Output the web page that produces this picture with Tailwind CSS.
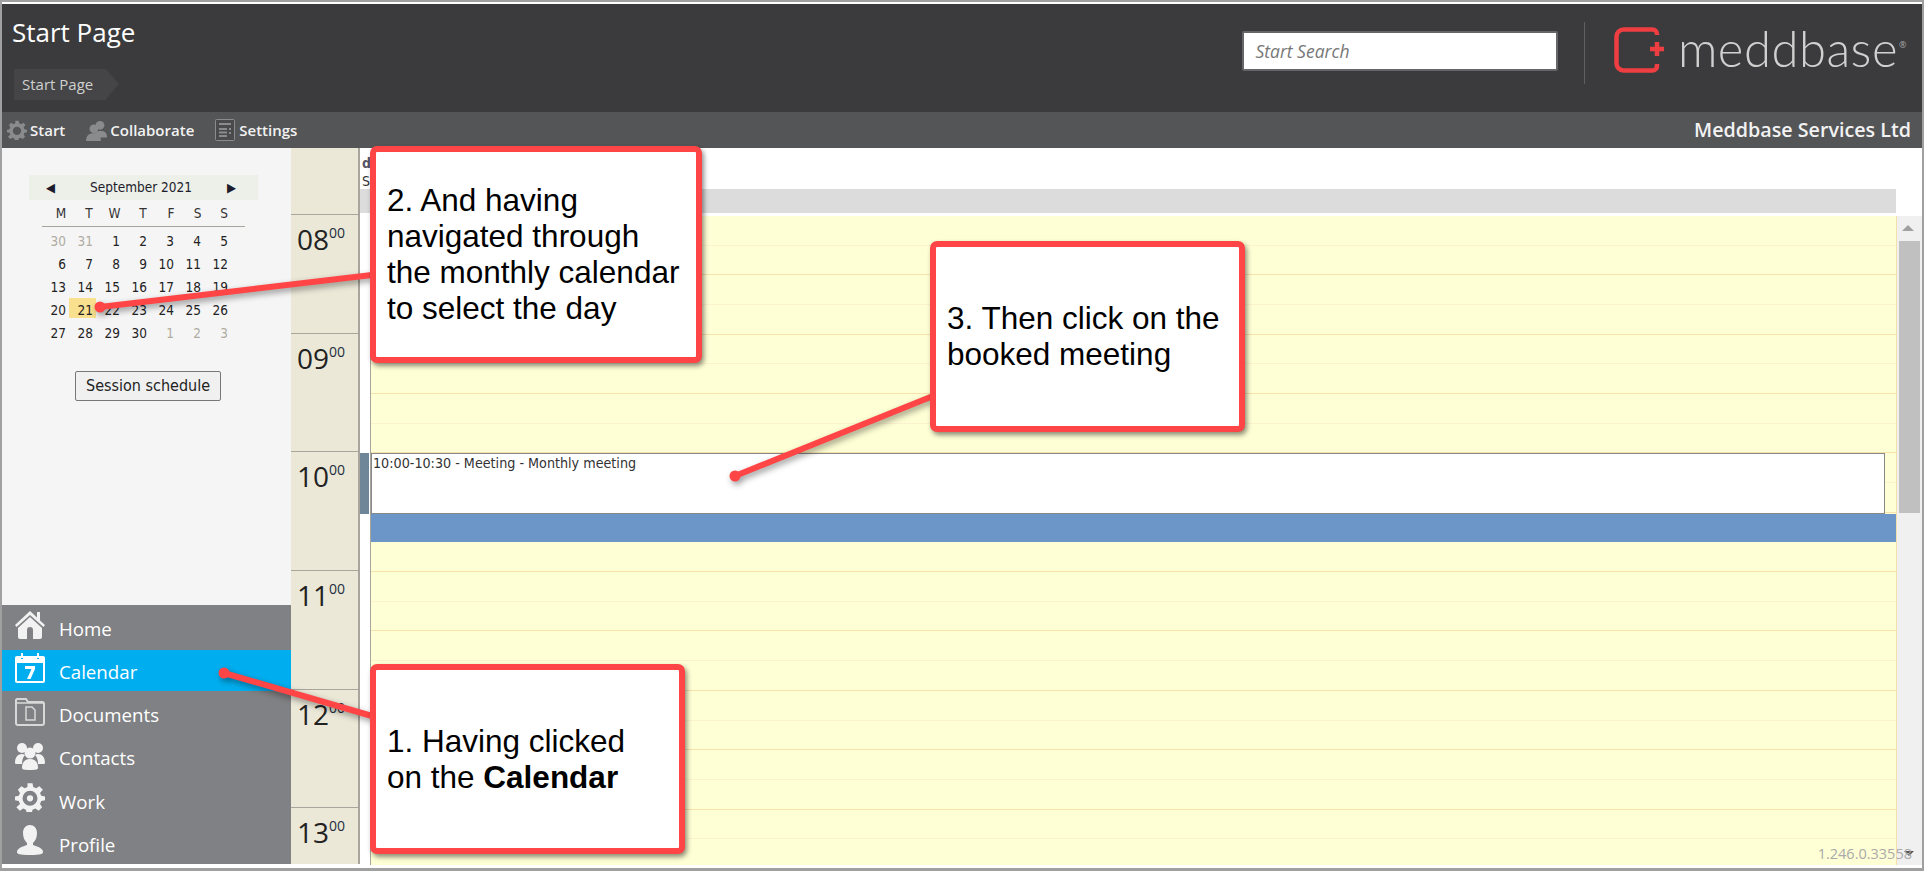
<!DOCTYPE html>
<html lang="en">
<head>
<meta charset="UTF-8">
<title>Start Page</title>
<script src="https://cdn.jsdelivr.net/npm/@tailwindcss/browser@4"></script>
</head>
<body class="bg-white font-['Open_Sans',sans-serif]">
<div class="relative w-[1924px] h-[871px] overflow-hidden border-2 border-[#a0a0a0] border-b-[3px] bg-white flex flex-col">
  <!-- header -->
  <header class="mt-[2px] h-[108px] shrink-0 bg-[#3b3b3d] flex justify-between">
    <div class="pl-[10px] pt-[12px]">
      <h1 class="text-[26px] leading-[32px] text-white">Start Page</h1>
      <div class="mt-[21px] ml-[2px] flex w-[105px] h-[31px]">
        <div class="w-[92px] bg-[#454547] text-[#d0d0d0] text-[15px] leading-[31px] pl-[8px] whitespace-nowrap">Start Page</div>
        <div class="w-0 h-0 border-y-[15.5px] border-y-transparent border-l-[13px] border-l-[#454547]"></div>
      </div>
    </div>
    <div class="flex items-start">
      <div class="mt-[27px] w-[316px] h-[40px] bg-white border-2 border-[#666668] rounded-[2px] pl-[11px] text-[17.500px] leading-[36px] italic text-[#777]">Start Search</div>
      <div class="ml-[26px] mt-[18px] w-px h-[62px] bg-[#5f5f61]"></div>
      <div class="ml-[29px] mt-[23px] flex items-start">
        <svg width="52" height="46" viewBox="0 0 52 46" class="shrink-0"><path d="M43 8V7a4.500 4.500 0 0 0-4.500-4.500H9.500a7 7 0 0 0-7 7v27a7 7 0 0 0 7 7h29a4.500 4.500 0 0 0 4.500-4.500v-2" fill="none" stroke="#ef3e42" stroke-width="4.500"/><path d="M43 15v14M36 22h14" stroke="#ef3e42" stroke-width="4.500"/></svg>
        <span class="ml-[11.500px] -mt-[9px] font-['Lato',sans-serif] font-light text-[49px] leading-[60px] text-[#d0d0d0] tracking-[0.5px]">meddbase</span>
        <span class="ml-[1px] mt-[12px] text-[9px] leading-[12px] text-[#aaa]">®</span>
      </div>
      <div class="w-[15.500px]"></div>
    </div>
  </header>
  <!-- toolbar -->
  <nav class="h-[36px] shrink-0 bg-[#545557] flex items-center justify-between text-[15px] font-semibold text-[#f2f2f2]">
    <div class="flex items-center pl-[5px]">
      <svg width="20" height="20" viewBox="0 0 24 24" fill="#8a8b8d"><path fill-rule="evenodd" d="M10 1h4l.6 3 2.300 1 2.600-1.700 2.800 2.800L20 8.700l1 2.300 3 .6v3l-3 .6-1 2.300 1.700 2.600-2.800 2.800-2.600-1.700-2.300 1-.6 3h-4l-.6-3-2.300-1-2.600 1.700-2.800-2.800L4 17.500 3 15.200 0 14.600v-3l3-.6 1-2.300L2.300 6.100l2.800-2.800L7.700 5 10 4zM12 8a5 5 0 1 0 0 10 5 5 0 0 0 0-10z"/></svg>
      <span class="ml-[3px] pt-[1px]">Start</span>
      <svg class="ml-[21px]" width="21" height="21" viewBox="0 0 24 24" fill="#8a8b8d"><circle cx="16" cy="6" r="5"/><path d="M10 15c2-3 10-3 12-1 2 2 2 5 2 6H14z"/><circle cx="9" cy="10" r="5"/><path d="M0 24c0-6 3-9 9-9s8 3 8 9z"/></svg>
      <span class="ml-[3px] pt-[1px]">Collaborate</span>
      <svg class="ml-[21px]" width="20" height="22" viewBox="0 0 20 22"><rect x="0.500" y="0.500" width="19" height="21" rx="1" fill="#4a4a4c" stroke="#8a8b8d"/><path d="M4 4h12v2H4zM4 9h8v2H4zM4 12.500h8v2H4zM4 16h8v2H4zM14 9h2v2h-2zM14 13h2v2h-2z" fill="#8a8b8d"/></svg>
      <span class="ml-[4px] pt-[1px]">Settings</span>
    </div>
    <div class="pr-[11px] text-[19.700px]">Meddbase Services Ltd</div>
  </nav>
  <!-- body -->
  <div class="flex flex-1 min-h-0">
    <aside class="w-[289px] shrink-0 flex flex-col h-[716px]">
      <div class="h-[457px] bg-[#f5f5f5] pt-[27px] pl-[27px] font-['DejaVu_Sans_Condensed','DejaVu_Sans',sans-serif] text-[13.500px] text-[#222]">
        <div class="w-[229px] h-[25px] bg-[#edf0e8] flex items-center justify-between pl-[17px] pr-[22px] text-[#1c1c2c]"><span class="text-[13px]">◀</span><span>September 2021</span><span class="text-[13px]">▶</span></div>
        <div class="ml-[13px] w-[203px] h-[27px] border-b border-[#a8a69c] grid grid-cols-[repeat(7,27px)] items-center text-center text-[#333]">
          <span class="pl-[11px]">M</span><span class="pl-[13px]">T</span><span class="pl-[10px]">W</span><span class="pl-[13px]">T</span><span class="pl-[15px]">F</span><span class="pl-[14px]">S</span><span class="pl-[13px]">S</span>
        </div>
        <div class="ml-[13px] mt-[2px] grid grid-cols-[repeat(7,27px)] auto-rows-[20px] gap-y-[3px] text-right leading-[24px]">
          <span class="pr-[3px] text-[#b0aca2]">30</span><span class="pr-[3px] text-[#b0aca2]">31</span><span class="pr-[3px]">1</span><span class="pr-[3px]">2</span><span class="pr-[3px]">3</span><span class="pr-[3px]">4</span><span class="pr-[3px]">5</span>
          <span class="pr-[3px]">6</span><span class="pr-[3px]">7</span><span class="pr-[3px]">8</span><span class="pr-[3px]">9</span><span class="pr-[3px]">10</span><span class="pr-[3px]">11</span><span class="pr-[3px]">12</span>
          <span class="pr-[3px]">13</span><span class="pr-[3px]">14</span><span class="pr-[3px]">15</span><span class="pr-[3px]">16</span><span class="pr-[3px]">17</span><span class="pr-[3px]">18</span><span class="pr-[3px]">19</span>
          <span class="pr-[3px]">20</span><span class="pr-[3px] bg-[#f9e08e]">21</span><span class="pr-[3px]">22</span><span class="pr-[3px]">23</span><span class="pr-[3px]">24</span><span class="pr-[3px]">25</span><span class="pr-[3px]">26</span>
          <span class="pr-[3px]">27</span><span class="pr-[3px]">28</span><span class="pr-[3px]">29</span><span class="pr-[3px]">30</span><span class="pr-[3px] text-[#b0aca2]">1</span><span class="pr-[3px] text-[#b0aca2]">2</span><span class="pr-[3px] text-[#b0aca2]">3</span>
        </div>
        <button class="block ml-[46px] mt-[30px] w-[146px] h-[30px] bg-[#f0f0f0] border border-[#777] rounded-[2px] text-[16px] text-[#222]">Session schedule</button>
      </div>
      <div class="h-[259px] bg-[#808184] text-white text-[18.700px] flex flex-col">
        <div class="h-[45px] flex items-center pl-[13px] pt-[3px]">
          <svg width="30" height="30" viewBox="0 0 30 30" class="-mt-[8px]" fill="#f2f2f2"><path d="M15 1 0 15l1.500 2L15 5l13.500 12 1.500-2-5-4.600V2h-3v5.600z"/><path fill-rule="evenodd" d="M15 7 3 18v9a2 2 0 0 0 2 2h20a2 2 0 0 0 2-2v-9zM12 20a3 3 0 0 1 6 0v9h-6z"/></svg>
          <span class="ml-[14px]">Home</span>
        </div>
        <div class="h-[41px] flex items-center pl-[13px] pt-[3px] bg-[#00aeef]">
          <svg width="30" height="30" viewBox="0 0 30 30" class="-mt-[8px]"><path fill="#fff" d="M2 3h4v3h2V3h14v3h2V3h4a2 2 0 0 1 2 2v23a2 2 0 0 1-2 2H2a2 2 0 0 1-2-2V5a2 2 0 0 1 2-2z"/><rect x="2" y="10" width="26" height="18" fill="#00aeef"/><path d="M10 13h10v3l-4.500 10h-3.500l4.500-10H10z" fill="#fff"/><path d="M6 0h2v5H6zM22 0h2v5h-2z" fill="#fff"/></svg>
          <span class="ml-[14px]">Calendar</span>
        </div>
        <div class="h-[43px] flex items-center pl-[13px] pt-[5px]">
          <svg width="30" height="30" viewBox="0 0 30 30" class="-mt-[8px]"><path d="M2 3h9l2 3h14a2 2 0 0 1 2 2v19a2 2 0 0 1-2 2H3a2 2 0 0 1-2-2V4z" fill="#808184" stroke="#d8d8d8" stroke-width="2"/><path d="M1 7h28" stroke="#d8d8d8" stroke-width="1.500"/><path d="M11 11h6l3 3v10h-9z" fill="none" stroke="#d8d8d8" stroke-width="1.500"/></svg>
          <span class="ml-[14px]">Documents</span>
        </div>
        <div class="h-[43px] flex items-center pl-[13px] pt-[5px]">
          <svg width="30" height="30" viewBox="0 0 30 30" class="-mt-[6px]" fill="#f2f2f2"><circle cx="7" cy="8" r="5"/><circle cx="23" cy="8" r="5"/><path d="M0 23c0-6 3-9 7-9 1 0 2 .3 3 1-2 2-3 5-3 9H3c-2 0-3 0-3-1zM30 23c0-6-3-9-7-9-1 0-2 .3-3 1 2 2 3 5 3 9h4c2 0 3 0 3-1z"/><circle cx="15" cy="13" r="5.500"/><path d="M7 28c0-6 3-9 8-9s8 3 8 9c0 1-1 2-8 2s-8-1-8-2z"/></svg>
          <span class="ml-[14px]">Contacts</span>
        </div>
        <div class="h-[43px] flex items-center pl-[13px] pt-[7px]">
          <svg width="30" height="30" viewBox="0 0 24 24" class="-mt-[10px]" fill="#f2f2f2"><path fill-rule="evenodd" d="M10 1h4l.6 3 2.300 1 2.600-1.700 2.800 2.800L20 8.700l1 2.300 3 .6v3l-3 .6-1 2.300 1.700 2.600-2.800 2.800-2.600-1.700-2.300 1-.6 3h-4l-.6-3-2.300-1-2.600 1.700-2.800-2.800L4 17.500 3 15.200 0 14.600v-3l3-.6 1-2.300L2.300 6.100l2.800-2.800L7.700 5 10 4zM12 7a6 6 0 1 0 0 12 6 6 0 0 0 0-12zm0 3.500a2.500 2.500 0 1 1 0 5 2.500 2.500 0 0 1 0-5z"/></svg>
          <span class="ml-[14px]">Work</span>
        </div>
        <div class="h-[43px] flex items-center pl-[13px] pt-[7px]">
          <svg width="30" height="30" viewBox="0 0 30 30" class="-mt-[10px]" fill="#f2f2f2"><path d="M15 0c4 0 7 3 7 8s-2 8-4 10v2c4 1.500 10 3 10 7 0 2-2 3-13 3S2 29 2 27c0-4 6-5.500 10-7v-2c-2-2-4-5-4-10s3-8 7-8z"/></svg>
          <span class="ml-[14px]">Profile</span>
        </div>
      </div>
    </aside>
    <!-- times -->
    <div class="w-[69px] shrink-0 bg-[#ebe8d8] border-r-2 border-r-[#a8a69c] h-[716px] pt-[66px] text-[#222]">
      <div class="border-t border-[#a8a69c]"></div>
      <div class="h-[118.700px] border-b border-[#a8a69c] pl-[6px] pt-[7px] text-[28px] leading-[34px]">08<sup class="text-[14px] -top-[12px] text-[#1d2d3d]">00</sup></div>
      <div class="h-[118.700px] border-b border-[#a8a69c] pl-[6px] pt-[7px] text-[28px] leading-[34px]">09<sup class="text-[14px] -top-[12px] text-[#1d2d3d]">00</sup></div>
      <div class="h-[118.700px] border-b border-[#a8a69c] pl-[6px] pt-[7px] text-[28px] leading-[34px]">10<sup class="text-[14px] -top-[12px] text-[#1d2d3d]">00</sup></div>
      <div class="h-[118.700px] border-b border-[#a8a69c] pl-[6px] pt-[7px] text-[28px] leading-[34px]">11<sup class="text-[14px] -top-[12px] text-[#1d2d3d]">00</sup></div>
      <div class="h-[118.700px] border-b border-[#a8a69c] pl-[6px] pt-[7px] text-[28px] leading-[34px]">12<sup class="text-[14px] -top-[12px] text-[#1d2d3d]">00</sup></div>
      <div class="h-[54px] pl-[6px] pt-[7px] text-[28px] leading-[34px]">13<sup class="text-[14px] -top-[12px] text-[#1d2d3d]">00</sup></div>
    </div>
    <!-- day column, its heading is hidden behind callout 2 apart from the first letters -->
    <div class="flex-1 min-w-0 flex flex-col bg-white">
      <div class="h-[41px] ml-[2px] w-[8px] overflow-hidden pt-[6px] font-['DejaVu_Sans_Condensed','DejaVu_Sans',sans-serif] text-[14px] leading-[18px] text-[#333]"><b class="text-[#556]">d</b><br>S</div>
      <div class="h-[24px] mr-[26px] bg-[#dcdcdc]"></div>
      <div class="h-[3px]"></div>
      <div class="flex h-[649px]">
        <div class="w-[11px] border-r border-[#a8a69c] relative">
          <div class="absolute left-0 top-[237px] w-[9px] h-[61px] bg-[#6f8598]"></div>
        </div>
        <div class="flex-1 min-w-0 bg-[#ffffd5] border-r border-[#f5dfa8] relative bg-[repeating-linear-gradient(to_bottom,#ffffd5_0,#ffffd5_28.700px,#fbf3cf_28.700px,#fbf3cf_29.700px,#ffffd5_29.700px,#ffffd5_58.350px,#f7e2ab_58.350px,#f7e2ab_59.350px)]">
          <div class="absolute left-0 right-[11px] top-[237px] h-[61px] bg-white border border-[#888] pl-[1px] font-['DejaVu_Sans_Condensed','DejaVu_Sans',sans-serif] text-[14.200px] leading-[18px] text-[#333]">10:00-10:30 - Meeting - Monthly meeting</div>
          <div class="absolute left-0 right-0 top-[298px] h-[28px] bg-[#6c96c8]"></div>
        </div>
        <div class="w-[25px] bg-[#f0f0f0] relative">
          <div class="absolute left-[5px] top-[9px] w-0 h-0 border-x-[6px] border-x-transparent border-b-[6px] border-b-[#a0a0a0]"></div>
          <div class="absolute left-[2px] top-[25px] w-[21px] h-[272px] bg-[#c0c0c0]"></div>
          <div class="absolute left-[7px] bottom-[9px] w-0 h-0 border-x-[5px] border-x-transparent border-t-[5px] border-t-[#505050]"></div>
        </div>
      </div>
    </div>
  </div>
  <div class="absolute right-[10px] bottom-[4px] text-[14.500px] leading-[20px] text-[#aaa]">1.246.0.33558</div>
  <!-- annotations -->
  <svg class="absolute -left-[2px] -top-[2px]" width="1924" height="871" style="filter:drop-shadow(2px 3px 3px rgba(0,0,0,.4))">
    <g stroke="#ff4545" stroke-width="6" fill="#ff4545">
      <path d="M100 307 372 275"/><circle cx="100" cy="307" r="5.500" stroke="none"/>
      <path d="M224 673 372 716"/><circle cx="224" cy="673" r="5.500" stroke="none"/>
      <path d="M735 476 933 396"/><circle cx="735" cy="476" r="5.500" stroke="none"/>
    </g>
  </svg>
  <div class="absolute left-[368px] top-[144px] w-[332px] h-[217px] bg-white border-[6px] border-[#ff4545] rounded-[7px] shadow-[2px_3px_5px_rgba(0,0,0,.45)] pl-[11px] pb-[2px] flex items-center font-['Liberation_Sans',sans-serif] text-[31.500px] leading-[36px] text-black">
    <p>2. And having<br>navigated through<br>the monthly calendar<br>to select the day</p>
  </div>
  <div class="absolute left-[928px] top-[239px] w-[315px] h-[191px] bg-white border-[6px] border-[#ff4545] rounded-[7px] shadow-[2px_3px_5px_rgba(0,0,0,.45)] pl-[11px] pb-[2px] flex items-center font-['Liberation_Sans',sans-serif] text-[31.500px] leading-[36px] text-black">
    <p>3. Then click on the<br>booked meeting</p>
  </div>
  <div class="absolute left-[368px] top-[662px] w-[315px] h-[190px] bg-white border-[6px] border-[#ff4545] rounded-[7px] shadow-[2px_3px_5px_rgba(0,0,0,.45)] pl-[11px] flex items-center font-['Liberation_Sans',sans-serif] text-[31.500px] leading-[36px] text-black">
    <p>1. Having clicked<br>on the <b>Calendar</b></p>
  </div>
</div>
</body>
</html>
